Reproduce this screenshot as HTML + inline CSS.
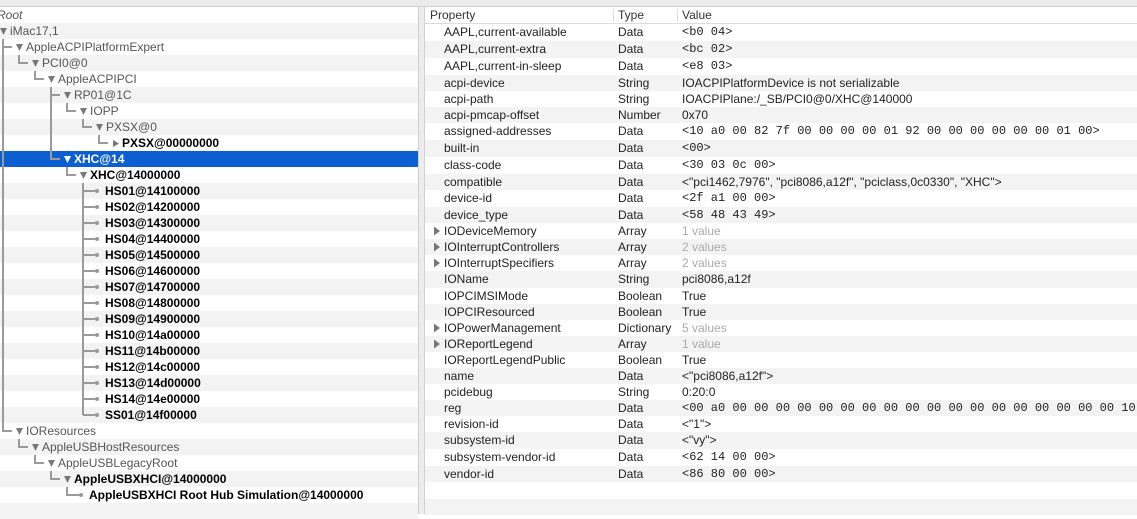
<!DOCTYPE html>
<html><head><meta charset="utf-8"><style>
*{margin:0;padding:0;box-sizing:border-box}
body{width:1137px;height:514px;overflow:hidden;background:#fff;font-family:"Liberation Sans",sans-serif;font-size:12px;position:relative}
.topbar{position:absolute;left:0;top:0;width:1137px;height:7px;background:#ececec;border-bottom:1px solid #cfcfcf}
.lr{position:absolute;left:0;width:418px;height:16px}
.g{background:#f3f3f3}
.t{position:absolute;line-height:16px;color:#555;white-space:nowrap}
.b{font-weight:bold;color:#000}
.sel{background:#0b5fd0}
.divider{position:absolute;left:418px;top:7px;width:7px;height:507px;background:#ececec;border-left:1px solid #d0d0d0;border-right:1px solid #d0d0d0}
.rr{position:absolute;left:425px;width:712px}
.c{position:absolute;line-height:16px;color:#222;white-space:nowrap}
.m{font-family:"Liberation Mono",monospace;font-size:12px}
.lt{color:#aaa}
.hdr{position:absolute;left:425px;top:7px;width:712px;height:17px;background:#fff;border-bottom:1px solid #ddd}
</style></head><body>
<div class="topbar"></div>
<div class="lr g" style="top:23px"></div><div class="lr g" style="top:55px"></div><div class="lr g" style="top:87px"></div><div class="lr g" style="top:119px"></div>
<div class="lr sel" style="top:151px"></div><div class="lr g" style="top:183px"></div><div class="lr g" style="top:215px"></div><div class="lr g" style="top:247px"></div><div class="lr g" style="top:279px"></div><div class="lr g" style="top:311px"></div><div class="lr g" style="top:343px"></div><div class="lr g" style="top:375px"></div><div class="lr g" style="top:407px"></div><div class="lr g" style="top:439px"></div><div class="lr g" style="top:471px"></div><div class="lr g" style="top:503px"></div>
<svg style="position:absolute;left:0;top:0" width="418" height="514">
<g stroke="#9a9a9a" stroke-width="2" fill="none">
<path d="M3 39V431H12"/><path d="M3 47H12"/>
<path d="M19 55V63H28"/><path d="M35 71V79H44"/>
<path d="M51 87V159H60"/><path d="M51 95H60"/>
<path d="M67 103V111H76"/><path d="M83 119V127H92"/><path d="M99 135V143H108"/>
<path d="M67 167V175H76"/>
<path d="M83 183V415"/>
<path d="M83 191H96M83 207H96M83 223H96M83 239H96M83 255H96M83 271H96M83 287H96M83 303H96M83 319H96M83 335H96M83 351H96M83 367H96M83 383H96M83 399H96M83 415H96"/>
<path d="M19 439V447H28"/><path d="M35 455V463H44"/><path d="M51 471V479H60"/><path d="M67 487V495H80"/>
</g>
<g fill="#9a9a9a">
<circle cx="97" cy="191" r="2"/><circle cx="97" cy="207" r="2"/><circle cx="97" cy="223" r="2"/><circle cx="97" cy="239" r="2"/><circle cx="97" cy="255" r="2"/><circle cx="97" cy="271" r="2"/><circle cx="97" cy="287" r="2"/><circle cx="97" cy="303" r="2"/><circle cx="97" cy="319" r="2"/><circle cx="97" cy="335" r="2"/><circle cx="97" cy="351" r="2"/><circle cx="97" cy="367" r="2"/><circle cx="97" cy="383" r="2"/><circle cx="97" cy="399" r="2"/><circle cx="97" cy="415" r="2"/><circle cx="81" cy="495" r="2"/>
</g>
<g fill="#777">
<path d="M0 28H7L3.5 35Z"/><path d="M16 44H23L19.5 51Z"/><path d="M32 60H39L35.5 67Z"/><path d="M48 76H55L51.5 83Z"/><path d="M64 92H71L67.5 99Z"/><path d="M80 108H87L83.5 115Z"/><path d="M96 124H103L99.5 131Z"/><path d="M113 140V147L119 143.5Z"/><path d="M80 172H87L83.5 179Z"/>
<path d="M16 428H23L19.5 435Z"/><path d="M32 444H39L35.5 451Z"/><path d="M48 460H55L51.5 467Z"/><path d="M64 476H71L67.5 483Z"/>
<path d="M64 156H71L67.5 163Z" fill="#fff"/>
</g>
</svg>
<div class="t" style="left:-3px;top:7px;font-style:italic">Root</div>
<div class="t" style="left:10px;top:23px">iMac17,1</div>
<div class="t" style="left:26px;top:39px">AppleACPIPlatformExpert</div>
<div class="t" style="left:42px;top:55px">PCI0@0</div>
<div class="t" style="left:58px;top:71px">AppleACPIPCI</div>
<div class="t" style="left:74px;top:87px">RP01@1C</div>
<div class="t" style="left:90px;top:103px">IOPP</div>
<div class="t" style="left:106px;top:119px">PXSX@0</div>
<div class="t b" style="left:122px;top:135px">PXSX@00000000</div>
<div class="t b" style="left:74px;top:151px;color:#fff">XHC@14</div>
<div class="t b" style="left:90px;top:167px">XHC@14000000</div>
<div class="t b" style="left:105px;top:183px">HS01@14100000</div>
<div class="t b" style="left:105px;top:199px">HS02@14200000</div>
<div class="t b" style="left:105px;top:215px">HS03@14300000</div>
<div class="t b" style="left:105px;top:231px">HS04@14400000</div>
<div class="t b" style="left:105px;top:247px">HS05@14500000</div>
<div class="t b" style="left:105px;top:263px">HS06@14600000</div>
<div class="t b" style="left:105px;top:279px">HS07@14700000</div>
<div class="t b" style="left:105px;top:295px">HS08@14800000</div>
<div class="t b" style="left:105px;top:311px">HS09@14900000</div>
<div class="t b" style="left:105px;top:327px">HS10@14a00000</div>
<div class="t b" style="left:105px;top:343px">HS11@14b00000</div>
<div class="t b" style="left:105px;top:359px">HS12@14c00000</div>
<div class="t b" style="left:105px;top:375px">HS13@14d00000</div>
<div class="t b" style="left:105px;top:391px">HS14@14e00000</div>
<div class="t b" style="left:105px;top:407px">SS01@14f00000</div>
<div class="t" style="left:26px;top:423px">IOResources</div>
<div class="t" style="left:42px;top:439px">AppleUSBHostResources</div>
<div class="t" style="left:58px;top:455px">AppleUSBLegacyRoot</div>
<div class="t b" style="left:74px;top:471px">AppleUSBXHCI@14000000</div>
<div class="t b" style="left:89px;top:487px">AppleUSBXHCI Root Hub Simulation@14000000</div>
<div class="divider"></div>
<div class="hdr"></div>
<div class="c" style="left:430px;top:7px;color:#333">Property</div>
<div class="c" style="left:618px;top:7px;color:#333">Type</div>
<div class="c" style="left:682px;top:7px;color:#333">Value</div>
<div style="position:absolute;left:613px;top:9px;width:1px;height:13px;background:#ddd"></div>
<div style="position:absolute;left:677px;top:9px;width:1px;height:13px;background:#ddd"></div>
<div class="rr g" style="top:41px;height:17px"></div><div class="rr g" style="top:75px;height:16px"></div><div class="rr g" style="top:107px;height:16px"></div><div class="rr g" style="top:140px;height:17px"></div><div class="rr g" style="top:174px;height:16px"></div><div class="rr g" style="top:207px;height:16px"></div><div class="rr g" style="top:239px;height:16px"></div><div class="rr g" style="top:271px;height:17px"></div><div class="rr g" style="top:304px;height:16px"></div><div class="rr g" style="top:336px;height:16px"></div><div class="rr g" style="top:368px;height:16px"></div><div class="rr g" style="top:400px;height:16px"></div><div class="rr g" style="top:432px;height:17px"></div><div class="rr g" style="top:466px;height:16px"></div><div class="rr g" style="top:499px;height:16px"></div>
<svg style="position:absolute;left:430px;top:0" width="12" height="514"><g fill="#777"><path d="M4 226.5V235.5L10 231Z"/><path d="M4 242.5V251.5L10 247Z"/><path d="M4 258.5V267.5L10 263Z"/><path d="M4 323.5V332.5L10 328Z"/><path d="M4 339.5V348.5L10 344Z"/></g></svg>
<div class="c" style="left:444px;top:24px">AAPL,current-available</div><div class="c" style="left:618px;top:24px">Data</div><div class="c m" style="left:682px;top:24px">&lt;b0 04&gt;</div>
<div class="c" style="left:444px;top:41px">AAPL,current-extra</div><div class="c" style="left:618px;top:41px">Data</div><div class="c m" style="left:682px;top:41px">&lt;bc 02&gt;</div>
<div class="c" style="left:444px;top:58px">AAPL,current-in-sleep</div><div class="c" style="left:618px;top:58px">Data</div><div class="c m" style="left:682px;top:58px">&lt;e8 03&gt;</div>
<div class="c" style="left:444px;top:75px">acpi-device</div><div class="c" style="left:618px;top:75px">String</div><div class="c" style="left:682px;top:75px">IOACPIPlatformDevice is not serializable</div>
<div class="c" style="left:444px;top:91px">acpi-path</div><div class="c" style="left:618px;top:91px">String</div><div class="c" style="left:682px;top:91px">IOACPIPlane:/_SB/PCI0@0/XHC@140000</div>
<div class="c" style="left:444px;top:107px">acpi-pmcap-offset</div><div class="c" style="left:618px;top:107px">Number</div><div class="c" style="left:682px;top:107px">0x70</div>
<div class="c" style="left:444px;top:123px">assigned-addresses</div><div class="c" style="left:618px;top:123px">Data</div><div class="c m" style="left:682px;top:123px">&lt;10 a0 00 82 7f 00 00 00 00 01 92 00 00 00 00 00 00 01 00&gt;</div>
<div class="c" style="left:444px;top:140px">built-in</div><div class="c" style="left:618px;top:140px">Data</div><div class="c m" style="left:682px;top:140px">&lt;00&gt;</div>
<div class="c" style="left:444px;top:157px">class-code</div><div class="c" style="left:618px;top:157px">Data</div><div class="c m" style="left:682px;top:157px">&lt;30 03 0c 00&gt;</div>
<div class="c" style="left:444px;top:174px">compatible</div><div class="c" style="left:618px;top:174px">Data</div><div class="c" style="left:682px;top:174px">&lt;"pci1462,7976", "pci8086,a12f", "pciclass,0c0330", "XHC"&gt;</div>
<div class="c" style="left:444px;top:190px">device-id</div><div class="c" style="left:618px;top:190px">Data</div><div class="c m" style="left:682px;top:190px">&lt;2f a1 00 00&gt;</div>
<div class="c" style="left:444px;top:207px">device_type</div><div class="c" style="left:618px;top:207px">Data</div><div class="c m" style="left:682px;top:207px">&lt;58 48 43 49&gt;</div>
<div class="c" style="left:444px;top:223px">IODeviceMemory</div><div class="c" style="left:618px;top:223px">Array</div><div class="c lt" style="left:682px;top:223px">1 value</div>
<div class="c" style="left:444px;top:239px">IOInterruptControllers</div><div class="c" style="left:618px;top:239px">Array</div><div class="c lt" style="left:682px;top:239px">2 values</div>
<div class="c" style="left:444px;top:255px">IOInterruptSpecifiers</div><div class="c" style="left:618px;top:255px">Array</div><div class="c lt" style="left:682px;top:255px">2 values</div>
<div class="c" style="left:444px;top:271px">IOName</div><div class="c" style="left:618px;top:271px">String</div><div class="c" style="left:682px;top:271px">pci8086,a12f</div>
<div class="c" style="left:444px;top:288px">IOPCIMSIMode</div><div class="c" style="left:618px;top:288px">Boolean</div><div class="c" style="left:682px;top:288px">True</div>
<div class="c" style="left:444px;top:304px">IOPCIResourced</div><div class="c" style="left:618px;top:304px">Boolean</div><div class="c" style="left:682px;top:304px">True</div>
<div class="c" style="left:444px;top:320px">IOPowerManagement</div><div class="c" style="left:618px;top:320px">Dictionary</div><div class="c lt" style="left:682px;top:320px">5 values</div>
<div class="c" style="left:444px;top:336px">IOReportLegend</div><div class="c" style="left:618px;top:336px">Array</div><div class="c lt" style="left:682px;top:336px">1 value</div>
<div class="c" style="left:444px;top:352px">IOReportLegendPublic</div><div class="c" style="left:618px;top:352px">Boolean</div><div class="c" style="left:682px;top:352px">True</div>
<div class="c" style="left:444px;top:368px">name</div><div class="c" style="left:618px;top:368px">Data</div><div class="c" style="left:682px;top:368px">&lt;"pci8086,a12f"&gt;</div>
<div class="c" style="left:444px;top:384px">pcidebug</div><div class="c" style="left:618px;top:384px">String</div><div class="c" style="left:682px;top:384px">0:20:0</div>
<div class="c" style="left:444px;top:400px">reg</div><div class="c" style="left:618px;top:400px">Data</div><div class="c m" style="left:682px;top:400px">&lt;00 a0 00 00 00 00 00 00 00 00 00 00 00 00 00 00 00 00 00 00 10 a0</div>
<div class="c" style="left:444px;top:416px">revision-id</div><div class="c" style="left:618px;top:416px">Data</div><div class="c" style="left:682px;top:416px">&lt;"1"&gt;</div>
<div class="c" style="left:444px;top:432px">subsystem-id</div><div class="c" style="left:618px;top:432px">Data</div><div class="c" style="left:682px;top:432px">&lt;"vy"&gt;</div>
<div class="c" style="left:444px;top:449px">subsystem-vendor-id</div><div class="c" style="left:618px;top:449px">Data</div><div class="c m" style="left:682px;top:449px">&lt;62 14 00 00&gt;</div>
<div class="c" style="left:444px;top:466px">vendor-id</div><div class="c" style="left:618px;top:466px">Data</div><div class="c m" style="left:682px;top:466px">&lt;86 80 00 00&gt;</div>
</body></html>
